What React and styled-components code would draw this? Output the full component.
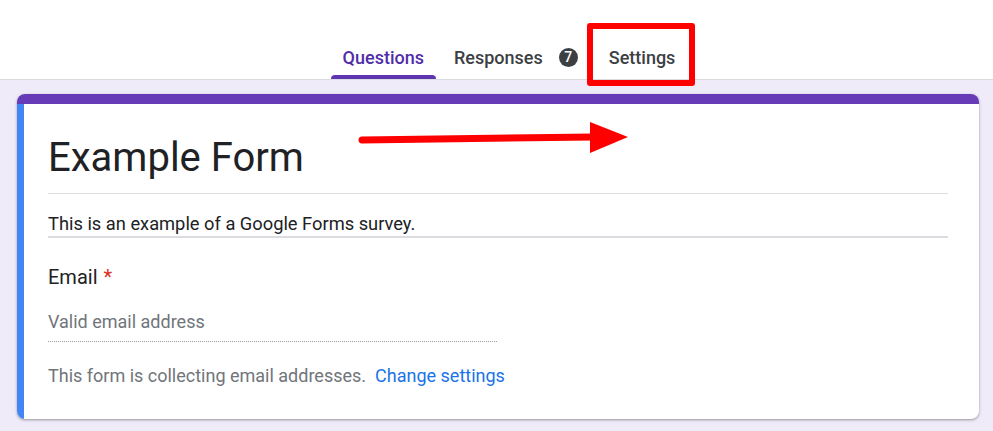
import React from 'react';
import styled, { createGlobalStyle } from 'styled-components';

const GlobalStyle = createGlobalStyle`
  html, body {
    margin: 0;
    padding: 0;
    background: #f0ebf8;
    font-family: Roboto, "Liberation Sans", Arial, sans-serif;
  }
`;

const Page = styled.div`
  position: relative;
  width: 993px;
  height: 431px;
  overflow: hidden;
  background: #f0ebf8;
`;

const Header = styled.div`
  height: 80px;
  background: #fff;
  border-bottom: 1px solid #dadce0;
  display: flex;
  justify-content: center;
  align-items: flex-end;
  gap: 6px;
  padding-left: 25px;
  box-sizing: border-box;
`;

const Tab = styled.div`
  position: relative;
  height: 44px;
  display: flex;
  align-items: center;
  padding: 0 ${(p) => p.$padR ?? 12}px 0 12px;
  font-size: 18px;
  font-weight: 500;
  color: ${(p) => (p.$active ? '#512da8' : '#3c4043')};
  &::after {
    content: '';
    display: ${(p) => (p.$active ? 'block' : 'none')};
    position: absolute;
    left: 0;
    right: 0;
    bottom: 0;
    height: 4px;
    border-radius: 4px 4px 0 0;
    background: #5e35b1;
  }
`;

const Badge = styled.span`
  display: inline-flex;
  align-items: center;
  justify-content: center;
  width: 19px;
  height: 19px;
  border-radius: 50%;
  background: #3c4043;
  color: #fff;
  font-size: 14px;
  font-weight: 500;
  margin-left: 16px;
`;

const Highlight = styled.div`
  position: absolute;
  left: 587px;
  top: 23px;
  width: 108px;
  height: 63px;
  box-sizing: border-box;
  border: 6px solid #ff0000;
  border-radius: 3px;
`;

const Arrow = styled.svg`
  position: absolute;
  left: 355px;
  top: 118px;
`;

const Card = styled.div`
  margin: 14px 14px 0 17px;
  background: #fff;
  border-radius: 8px;
  overflow: hidden;
  box-shadow: 0 1px 2px rgba(60, 64, 67, 0.35), 0 1px 3px 1px rgba(60, 64, 67, 0.12);
`;

const TopBand = styled.div`
  height: 10px;
  background: #673ab7;
`;

const CardBody = styled.div`
  border-left: 7px solid #4285f4;
  padding: 30px 31px 31px 24px;
`;

const Title = styled.div`
  font-size: 40px;
  line-height: 48px;
  color: #202124;
  padding-bottom: 11px;
  border-bottom: 1px solid #dadce0;
`;

const Description = styled.div`
  margin-top: 18px;
  font-size: 18.3px;
  line-height: 24px;
  color: #202124;
  border-bottom: 2px solid #dadce0;
`;

const Question = styled.div`
  margin-top: 27px;
  font-size: 20px;
  line-height: 24px;
  color: #202124;
`;

const Required = styled.span`
  color: #d93025;
  margin-left: 6px;
`;

const Placeholder = styled.div`
  margin-top: 21px;
  width: 449px;
  font-size: 18px;
  line-height: 24px;
  color: #70757a;
  padding-bottom: 7px;
  border-bottom: 1px dotted #9aa0a6;
`;

const Note = styled.div`
  margin-top: 22px;
  font-size: 18px;
  line-height: 24px;
  color: #70757a;
`;

const Link = styled.a`
  color: #1a73e8;
  text-decoration: none;
  margin-left: 9px;
`;

export default function App() {
  return (
    <Page>
      <GlobalStyle />
      <Header>
        <Tab $active>Questions</Tab>
        <Tab $padR={13}>
          Responses
          <Badge>7</Badge>
        </Tab>
        <Tab>Settings</Tab>
      </Header>
      <Card>
        <TopBand />
        <CardBody>
          <Title>Example Form</Title>
          <Description>This is an example of a Google Forms survey.</Description>
          <Question>
            Email<Required>*</Required>
          </Question>
          <Placeholder>Valid email address</Placeholder>
          <Note>
            This form is collecting email addresses.
            <Link href="#">Change settings</Link>
          </Note>
        </CardBody>
      </Card>
      <Highlight />
      <Arrow width="280" height="40" viewBox="0 0 280 40">
        <line x1="7" y1="22" x2="238" y2="19" stroke="#ff0000" strokeWidth="7" strokeLinecap="round" />
        <polygon points="235,4 273,19 235,35" fill="#ff0000" />
      </Arrow>
    </Page>
  );
}
